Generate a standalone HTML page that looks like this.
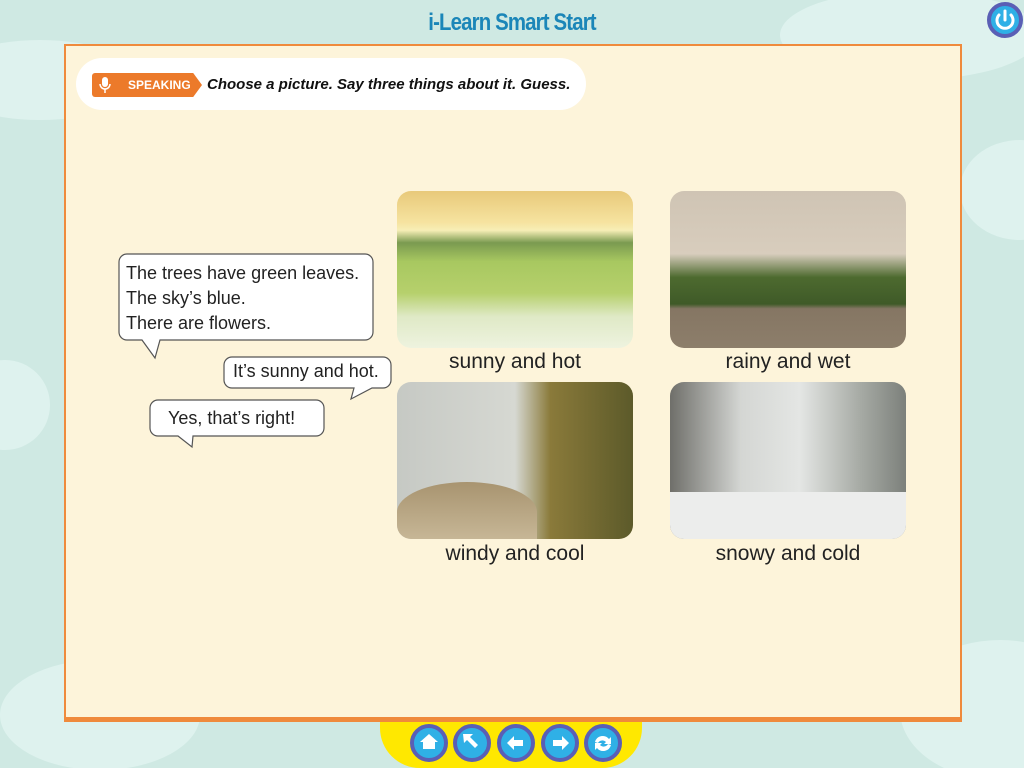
<!DOCTYPE html>
<html><head><meta charset="utf-8"><style>
*{margin:0;padding:0;box-sizing:border-box}
html,body{width:1024px;height:768px;overflow:hidden}
body{background:#cfe9e3;font-family:"Liberation Sans",sans-serif;position:relative}
.cloud{position:absolute;background:#def2ee;border-radius:50%}
.title{position:absolute;left:0;width:1024px;top:9px;text-align:center;color:#1b86b8;font-weight:bold;font-size:24px;letter-spacing:-1px;transform:scaleX(0.85)}
.frame{position:absolute;left:64px;top:44px;width:898px;height:678px;background:#fdf4da;border:2px solid #ef8a3c;border-bottom:5px solid #ef8a3c}
.inst{position:absolute;left:76px;top:58px;width:510px;height:52px;background:#fff;border-radius:26px}
.tag{position:absolute;left:92px;top:73px;height:24px;width:110px;background:#ec7a2a;border-radius:3px;clip-path:polygon(0 0,92% 0,100% 50%,92% 100%,0 100%)}
.tag span{position:absolute;left:36px;top:5px;color:#fff;font-weight:bold;font-size:12px}
.itxt{position:absolute;left:207px;top:76px;font-weight:bold;font-style:italic;font-size:15px;color:#111}
.img{position:absolute;border-radius:14px;overflow:hidden}
.lbl{position:absolute;font-size:21px;color:#222;text-align:center;width:236px}
.bt{position:absolute;font-size:18px;color:#222;line-height:25px}
.nav{position:absolute;left:380px;top:722px;width:262px;height:46px;background:#ffe800;border-radius:0 0 40px 40px}
.btn{position:absolute;top:724px;width:38px;height:38px;border-radius:50%;background:#2fb0e6;border:4px solid #5a5fb5}
</style></head><body>
<div class="cloud" style="left:-60px;top:40px;width:200px;height:80px"></div>
<div class="cloud" style="left:780px;top:-10px;width:260px;height:90px"></div>
<div class="cloud" style="left:960px;top:140px;width:120px;height:100px"></div>
<div class="cloud" style="left:-40px;top:360px;width:90px;height:90px"></div>
<div class="cloud" style="left:0px;top:660px;width:200px;height:110px"></div>
<div class="cloud" style="left:900px;top:640px;width:200px;height:140px"></div>
<div class="title">i-Learn Smart Start</div>
<div style="position:absolute;left:987px;top:2px;width:36px;height:36px;border-radius:50%;background:#2fb0e6;border:4px solid #5a5fb5"></div>
<svg style="position:absolute;left:987px;top:2px" width="36" height="36"><path d="M12 13a8 8 0 1 0 12 0" fill="none" stroke="#fff" stroke-width="3" stroke-linecap="round"/><path d="M18 9v9" stroke="#fff" stroke-width="3" stroke-linecap="round"/></svg>
<div class="frame"></div>
<div class="inst"></div>
<div class="tag"><span>SPEAKING</span></div>
<svg style="position:absolute;left:98px;top:76px" width="14" height="18"><rect x="4" y="1" width="6" height="10" rx="3" fill="#fff"/><path d="M2 8a5 5 0 0 0 10 0M7 13v4" stroke="#fff" fill="none" stroke-width="1.5"/></svg>
<div class="itxt">Choose a picture. Say three things about it. Guess.</div>

<div class="img" style="left:397px;top:191px;width:236px;height:157px;background:linear-gradient(#e8c97a 0%,#f6e3a0 20%,#f7eeb6 25%,#7a9a50 33%,#a8c860 45%,#b6d06c 65%,#dfe9c6 80%,#eef3df 100%)"></div>
<div class="img" style="left:670px;top:191px;width:236px;height:157px;background:linear-gradient(#cfc4b4 0%,#d8cdbd 40%,#4d6a2f 55%,#3f5a28 72%,#857663 75%,#8d7e6b 100%)"></div>
<div class="img" style="left:397px;top:382px;width:236px;height:157px;background:linear-gradient(90deg,#c6c9c4 0%,#d6d8d2 50%,#8a7a3a 65%,#5c5a2a 100%)"><div style="position:absolute;left:0;top:100px;width:140px;height:60px;background:linear-gradient(#a89470,#c8b898);border-radius:50% 50% 0 0"></div></div>
<div class="img" style="left:670px;top:382px;width:236px;height:157px;background:linear-gradient(90deg,#6f6f6a 0%,#d4d6d3 30%,#e4e6e4 55%,#a8aca6 80%,#7c807b 100%)"><div style="position:absolute;left:0;top:110px;width:236px;height:47px;background:#ecedec"></div></div>
<div class="lbl" style="left:397px;top:350px">sunny and hot</div>
<div class="lbl" style="left:670px;top:350px">rainy and wet</div>
<div class="lbl" style="left:397px;top:542px">windy and cool</div>
<div class="lbl" style="left:670px;top:542px">snowy and cold</div>

<svg style="position:absolute;left:0;top:0" width="1024" height="768">
<g fill="#fff" stroke="#555" stroke-width="1.2">
<path d="M127 254H365a8 8 0 0 1 8 8V332a8 8 0 0 1-8 8H160L155 358L142 340H127a8 8 0 0 1-8-8V262a8 8 0 0 1 8-8z"/>
<path d="M232 357H383a8 8 0 0 1 8 8V380a8 8 0 0 1-8 8H372L351 399L354 388H232a8 8 0 0 1-8-8V365a8 8 0 0 1 8-8z"/>
<path d="M158 400H316a8 8 0 0 1 8 8V428a8 8 0 0 1-8 8H193L192 447L178 436H158a8 8 0 0 1-8-8V408a8 8 0 0 1 8-8z"/>
</g></svg>
<div class="bt" style="left:126px;top:261px">The trees have green leaves.<br>The sky’s blue.<br>There are flowers.</div>
<div class="bt" style="left:233px;top:359px">It’s sunny and hot.</div>
<div class="bt" style="left:168px;top:406px">Yes, that’s right!</div>

<div class="nav"></div>
<div class="btn" style="left:410px"></div>
<div class="btn" style="left:453px"></div>
<div class="btn" style="left:497px"></div>
<div class="btn" style="left:541px"></div>
<div class="btn" style="left:584px"></div>
<svg style="position:absolute;left:0;top:0" width="1024" height="768" fill="#fff">
<path d="M429 734l-9 8h3v7h12v-7h3z"/>
<path d="M463 734h10l-3 3 8 8-3 3-8-8-3 3z"/>
<path d="M507 743l7-7v4h9v6h-9v4z"/>
<path d="M569 743l-7-7v4h-9v6h9v4z"/>
<path d="M595 742a8 8 0 0 1 14-3l2-2v7h-7l2-2a5 5 0 0 0-8 1zM611 745a8 8 0 0 1-14 3l-2 2v-7h7l-2 2a5 5 0 0 0 8-1z"/>
</svg>
</body></html>
